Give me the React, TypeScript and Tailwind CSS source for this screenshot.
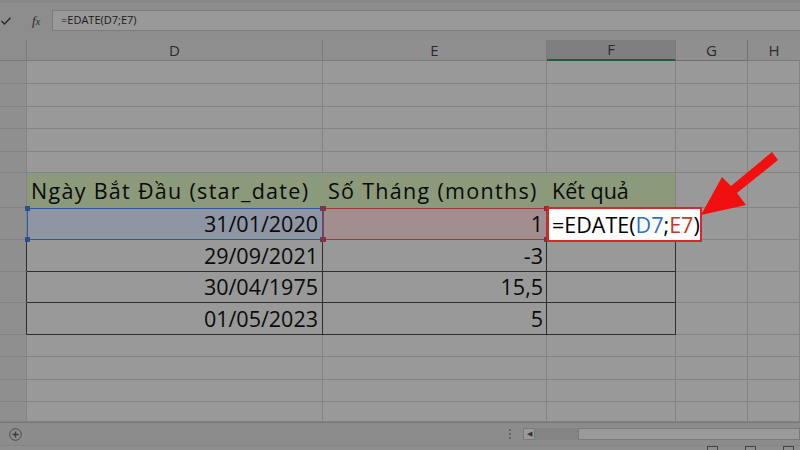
import React from "react";

const grid = "border-r border-b border-[#838383]";
const dark = "border-r border-b border-[#2e2e2e]";

type Row = { h: string; d: string; e: string };

const upper = ["h-[23px]", "h-[23px]", "h-[22px]", "h-[23px]", "h-[21px]"];
const lower = ["h-[22px]", "h-[23px]", "h-[22px]", "h-[20px]"];

const data: Row[] = [
  { h: "h-[32px]", d: "29/09/2021", e: "-3" },
  { h: "h-[31px]", d: "30/04/1975", e: "15,5" },
  { h: "h-[32px]", d: "01/05/2023", e: "5" },
];

function EmptyRow({ h }: { h: string }) {
  return (
    <div className={`flex ${h}`}>
      <div className={`w-[27px] bg-[#8f8f8f] ${grid}`} />
      <div className={`w-[296px] ${grid}`} />
      <div className={`w-[224px] ${grid}`} />
      <div className={`w-[129px] ${grid}`} />
      <div className={`w-[72px] ${grid}`} />
      <div className={`flex-1 ${grid}`} />
    </div>
  );
}

function Handles({ color }: { color: string }) {
  return (
    <>
      <span className={`absolute -left-[3px] -top-[3px] w-[5px] h-[5px] ${color}`} />
      <span className={`absolute -right-[3px] -top-[3px] w-[5px] h-[5px] ${color}`} />
      <span className={`absolute -left-[3px] -bottom-[3px] w-[5px] h-[5px] ${color}`} />
      <span className={`absolute -right-[3px] -bottom-[3px] w-[5px] h-[5px] ${color}`} />
    </>
  );
}

export default function App() {
  return (
    <div className="relative w-[800px] h-[450px] overflow-hidden bg-[#8d8d8d] flex flex-col font-['Open_Sans','Noto_Sans',sans-serif] text-[#0a0a0a]">
      {/* ribbon edge */}
      <div className="h-[10px] border-t-[3px] border-[#878787]" />

      {/* formula bar */}
      <div className="h-[21px] flex">
        <div className="w-[52px] flex items-center">
          <svg width="10" height="8" viewBox="0 0 10 8" className="ml-[1px]">
            <path d="M0.5 4 L3.5 7 L9.5 0.8" fill="none" stroke="#2a2a2a" strokeWidth="1.4" />
          </svg>
          <span className="ml-[21px] font-['Liberation_Serif',serif] italic text-[13px] text-[#2a2a2a] leading-none">
            f<span className="text-[10px]">x</span>
          </span>
        </div>
        <div className="flex-1 flex items-center bg-[#999999] border-y border-l border-[#7c7c7c] pl-[8px] text-[11px] text-[#1a1a1a]">
          =EDATE(D7;E7)
        </div>
      </div>

      <div className="h-[9px]" />

      {/* column headers */}
      <div className="flex h-[21px] text-[15px] text-[#2b2b2b] leading-none">
        <div className="w-[27px] border-r border-b border-[#7b7b7b]" />
        <div className="w-[296px] flex items-center justify-center bg-[#8f8f8f] border-r border-b border-[#7b7b7b]">D</div>
        <div className="w-[224px] flex items-center justify-center bg-[#8f8f8f] border-r border-b border-[#7b7b7b]">E</div>
        <div className="w-[129px] flex items-center justify-center bg-[#7f7f7f] border-r border-[#7b7b7b] border-b-2 border-b-[#245a3d]">F</div>
        <div className="w-[72px] flex items-center justify-center bg-[#8f8f8f] border-r border-b border-[#6f6f6f]">G</div>
        <div className="flex-1 flex items-center justify-center bg-[#8f8f8f] border-b border-[#7b7b7b]">H</div>
      </div>

      {/* sheet */}
      <div className="bg-[#999999] text-[21.5px] leading-none">
        {upper.map((h, i) => (
          <EmptyRow key={i} h={h} />
        ))}

        {/* table header */}
        <div className="flex h-[35px]">
          <div className={`w-[27px] bg-[#8f8f8f] ${grid}`} />
          <div className="w-[296px] flex items-center pl-[4px] bg-[#8a9a7b] whitespace-nowrap tracking-[1.3px]">Ngày Bắt Đầu (star_date)</div>
          <div className="w-[224px] flex items-center pl-[5px] bg-[#8a9a7b] whitespace-nowrap tracking-[1.3px]">Số Tháng (months)</div>
          <div className="w-[129px] flex items-center pl-[5px] bg-[#8a9a7b] border-r border-[#838383] whitespace-nowrap">Kết quả</div>
          <div className={`w-[72px] ${grid}`} />
          <div className={`flex-1 ${grid}`} />
        </div>

        {/* row 7 */}
        <div className="flex h-[32px]">
          <div className={`w-[27px] bg-[#8f8f8f] ${grid}`} />
          <div className="relative w-[296px] flex items-center justify-end pr-[4px] bg-[#8e96a4] border border-[#2f57a3]">
            31/01/2020
            <Handles color="bg-[#2f4f8c]" />
          </div>
          <div className="relative w-[224px] flex items-center justify-end pr-[3px] bg-[#a28e8f] border border-[#a33639]">
            1
            <Handles color="bg-[#8e3033]" />
          </div>
          <div className={`w-[129px] ${dark}`} />
          <div className={`w-[72px] ${grid}`} />
          <div className={`flex-1 ${grid}`} />
        </div>

        {data.map((r, i) => (
          <div key={i} className={`flex ${r.h}`}>
            <div className="w-[27px] bg-[#8f8f8f] border-r border-r-[#2e2e2e] border-b border-b-[#838383]" />
            <div className={`w-[296px] flex items-center justify-end pr-[4px] ${dark}`}>{r.d}</div>
            <div className={`w-[224px] flex items-center justify-end pr-[3px] ${dark}`}>{r.e}</div>
            <div className={`w-[129px] ${dark}`} />
            <div className={`w-[72px] ${grid}`} />
            <div className={`flex-1 ${grid}`} />
          </div>
        ))}

        {lower.map((h, i) => (
          <EmptyRow key={i} h={h} />
        ))}
      </div>

      {/* sheet tabs / scroll bar */}
      <div className="h-[23px] flex items-center border-t border-[#767676] bg-[#8c8c8c]">
        <div className="w-[503px] pl-[9px] flex items-center">
          <svg width="13" height="13" viewBox="0 0 13 13">
            <circle cx="6.5" cy="6.5" r="5.8" fill="none" stroke="#4a4a4a" strokeWidth="1" />
            <path d="M6.5 3.5 V9.5 M3.5 6.5 H9.5" stroke="#3a3a3a" strokeWidth="1.4" />
          </svg>
        </div>
        <div className="w-[20px] pl-[6px] flex flex-col gap-[2px]">
          <span className="w-[1.5px] h-[2px] bg-[#666]" />
          <span className="w-[1.5px] h-[2px] bg-[#666]" />
          <span className="w-[1.5px] h-[2px] bg-[#666]" />
        </div>
        <div className="w-[12px] h-[12px] flex items-center justify-center bg-[#9a9a9a] border border-[#7a7a7a] text-[7px] text-[#333]">◀</div>
        <div className="w-[43px] h-[12px] bg-[#848484]" />
        <div className="flex-1 h-[12px] bg-[#9a9a9a] border border-[#7a7a7a]" />
      </div>

      {/* status bar */}
      <div className="h-[5px] flex justify-end items-start gap-[27px] pr-[6px] bg-[#8e8e8e] border-t border-[#858585]">
        <span className="w-[11px] h-[4px] border-t border-x border-[#444]" />
        <span className="w-[11px] h-[4px] border-t border-x border-[#444]" />
        <span className="w-[11px] h-[4px] border-t border-x border-[#444]" />
      </div>

      {/* active cell F7 being edited */}
      <div className="absolute left-[547px] top-[207px] w-[155px] h-[35px] bg-white border-2 border-[#d9262b] flex items-center pl-[3px] text-[21.5px] leading-none text-black whitespace-nowrap">
        =EDATE(<span className="text-[#2f6fcf]">D7</span>;<span className="text-[#c0392b]">E7</span>)
      </div>

      {/* arrow */}
      <svg className="absolute left-0 top-0 pointer-events-none" width="800" height="450" viewBox="0 0 800 450">
        <polygon points="701,215 722,177 731,186 772,152 778,160 737,193 746,205" fill="#f20f0f" />
      </svg>
    </div>
  );
}
